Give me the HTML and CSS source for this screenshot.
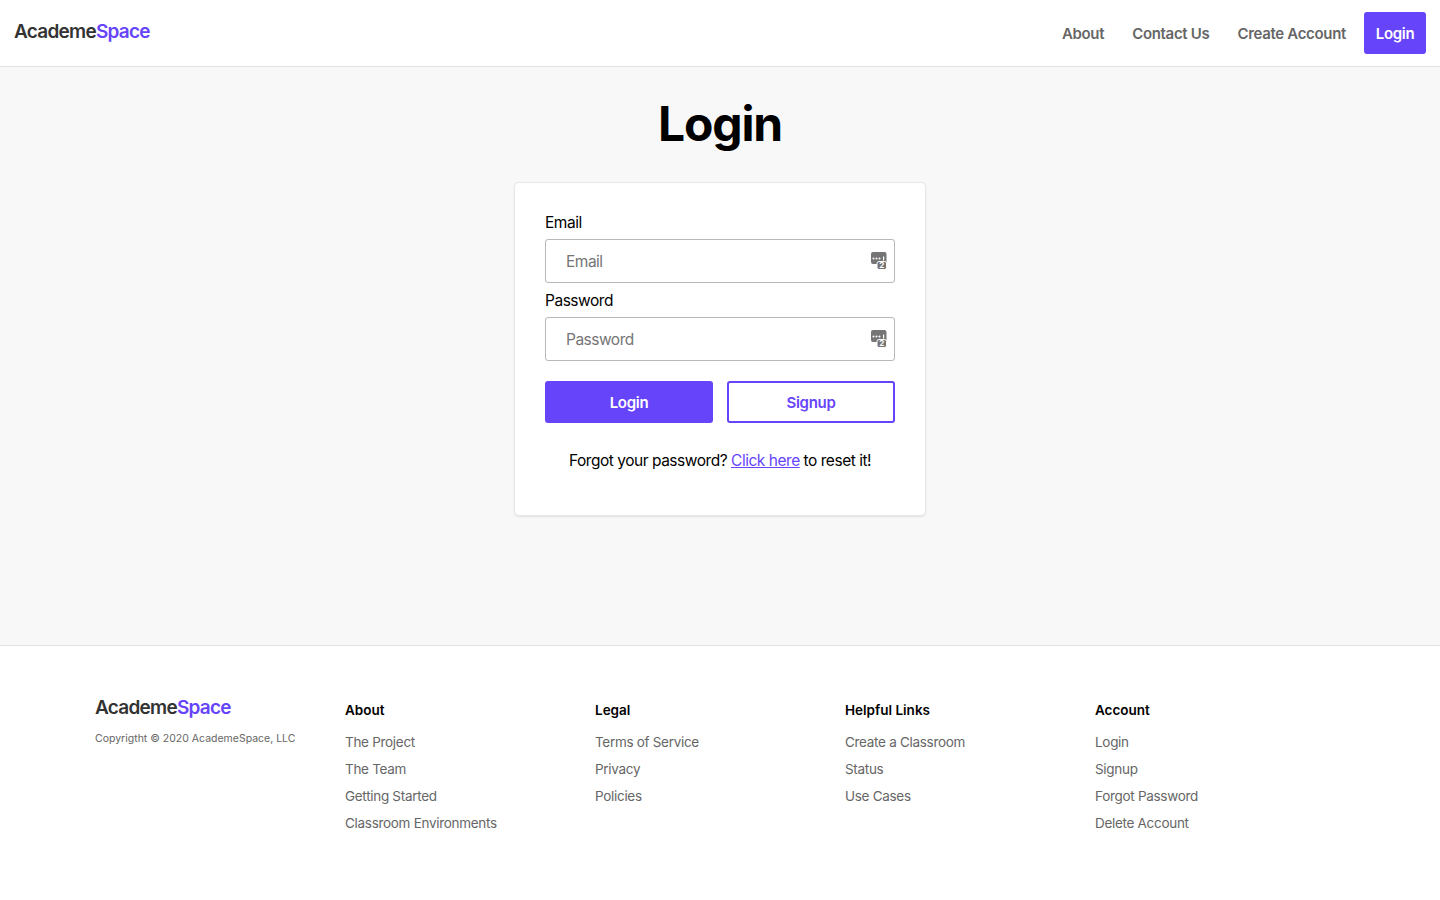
FILE: index.html
```
<!DOCTYPE html>
<html lang="en">
<head>
<meta charset="utf-8">
<title>Login - AcademeSpace</title>
<link rel="stylesheet" href="styles.css">
</head>
<body>
<header class="topbar">
  <a class="logo" href="#">Academe<span class="logo-accent">Space</span></a>
  <nav class="topnav">
    <a class="topnav-link" href="#">About</a>
    <a class="topnav-link" href="#">Contact Us</a>
    <a class="topnav-link" href="#">Create Account</a>
    <a class="topnav-btn" href="#">Login</a>
  </nav>
</header>
<main class="main">
  <h1 class="title">Login</h1>
  <form class="card">
    <label class="label" for="email">Email</label>
    <div class="field">
      <input class="input" id="email" placeholder="Email">
      <svg class="field-icon" width="16" height="18" viewBox="0 0 16 18"><rect x="0" y="0" width="15.5" height="12" rx="2" fill="#757575"/><circle cx="2.5" cy="6.5" r="1" fill="#fff"/><circle cx="5.5" cy="6.5" r="1" fill="#fff"/><circle cx="8.5" cy="6.5" r="1" fill="#fff"/><rect x="12" y="4.5" width="1.2" height="4" fill="#fff"/><rect x="6" y="9.5" width="9.5" height="8" rx="2" fill="#757575" stroke="#fff" stroke-width="1"/><text x="10.8" y="16.4" class="icon-num" text-anchor="middle">2</text></svg>
    </div>
    <label class="label" for="password">Password</label>
    <div class="field">
      <input class="input" id="password" placeholder="Password">
      <svg class="field-icon" width="16" height="18" viewBox="0 0 16 18"><rect x="0" y="0" width="15.5" height="12" rx="2" fill="#757575"/><circle cx="2.5" cy="6.5" r="1" fill="#fff"/><circle cx="5.5" cy="6.5" r="1" fill="#fff"/><circle cx="8.5" cy="6.5" r="1" fill="#fff"/><rect x="12" y="4.5" width="1.2" height="4" fill="#fff"/><rect x="6" y="9.5" width="9.5" height="8" rx="2" fill="#757575" stroke="#fff" stroke-width="1"/><text x="10.8" y="16.4" class="icon-num" text-anchor="middle">2</text></svg>
    </div>
    <div class="actions">
      <button class="btn btn-primary" type="button">Login</button>
      <button class="btn btn-outline" type="button">Signup</button>
    </div>
    <p class="forgot">Forgot your password? <a class="forgot-link" href="#">Click here</a> to reset it!</p>
  </form>
</main>
<footer class="footer">
  <div class="footer-brand">
    <a class="logo" href="#">Academe<span class="logo-accent">Space</span></a>
    <p class="copyright">Copyrigtht © 2020 AcademeSpace, LLC</p>
  </div>
  <div class="footer-col">
    <h2 class="footer-heading">About</h2>
    <a class="footer-link" href="#">The Project</a>
    <a class="footer-link" href="#">The Team</a>
    <a class="footer-link" href="#">Getting Started</a>
    <a class="footer-link" href="#">Classroom Environments</a>
  </div>
  <div class="footer-col">
    <h2 class="footer-heading">Legal</h2>
    <a class="footer-link" href="#">Terms of Service</a>
    <a class="footer-link" href="#">Privacy</a>
    <a class="footer-link" href="#">Policies</a>
  </div>
  <div class="footer-col">
    <h2 class="footer-heading">Helpful Links</h2>
    <a class="footer-link" href="#">Create a Classroom</a>
    <a class="footer-link" href="#">Status</a>
    <a class="footer-link" href="#">Use Cases</a>
  </div>
  <div class="footer-col">
    <h2 class="footer-heading">Account</h2>
    <a class="footer-link" href="#">Login</a>
    <a class="footer-link" href="#">Signup</a>
    <a class="footer-link" href="#">Forgot Password</a>
    <a class="footer-link" href="#">Delete Account</a>
  </div>
</footer>
</body>
</html>
```
FILE: styles.css
```
* { box-sizing: border-box; }
html, body { margin: 0; padding: 0; }
body {
  font-family: Inter, "Liberation Sans", sans-serif;
  background: #fff;
  color: #000;
  min-height: 900px;
}
a { text-decoration: none; }

.topbar {
  height: 67px;
  padding: 0 14px;
  display: flex;
  align-items: center;
  justify-content: space-between;
  border-bottom: 1px solid #e4e4e4;
  background: #fff;
}
.logo {
  font-size: 19px;
  font-weight: 600;
  letter-spacing: -0.75px;
  line-height: 24px;
  color: #333;
  display: block;
}
.topbar .logo { margin-top: -3px; }
.logo-accent { color: #6644fa; }
.topnav { display: flex; align-items: center; gap: 28px; }
.topnav-link { font-size: 15px; font-weight: 600; color: #666; letter-spacing: -0.32px; }
.topnav-btn {
  margin-left: -10px;
  width: 62px;
  height: 42px;
  display: flex;
  align-items: center;
  justify-content: center;
  border-radius: 3px;
  background: #6644fa;
  color: #fff;
  font-size: 15px;
  font-weight: 600;
  letter-spacing: -0.32px;
}

.main {
  height: 578px;
  background: #f8f8f8;
  display: flex;
  flex-direction: column;
  align-items: center;
  padding-top: 27px;
}
.title {
  margin: 0 0 28px;
  font-size: 48px;
  line-height: 60px;
  font-weight: 700;
  letter-spacing: -1.2px;
  color: #000;
}
.card {
  width: 412px;
  height: 334px;
  padding: 30px;
  background: #fff;
  border: 1px solid #e8e8e8;
  border-radius: 5px;
  box-shadow: 0 1px 2px rgba(0, 0, 0, 0.1);
}
.label {
  display: block;
  font-size: 15.5px;
  line-height: 19px;
  letter-spacing: -0.47px;
  margin-bottom: 7px;
}
.field { position: relative; margin-bottom: 8px; }
.input {
  display: block;
  width: 100%;
  height: 44px;
  padding: 0 20px;
  border: 1px solid #b8b8b8;
  border-radius: 3px;
  background: #fff;
  font-family: inherit;
  font-size: 15.5px;
  letter-spacing: -0.5px;
  outline: none;
}
.input::placeholder { color: #757575; opacity: 1; }
.field-icon { position: absolute; top: 13px; right: 8px; }
.icon-num { font-family: Inter, sans-serif; font-size: 8px; font-weight: 700; fill: #fff; }
.actions { display: flex; gap: 14px; margin-top: 20px; }
.btn {
  flex: 1;
  height: 42px;
  border-radius: 3px;
  font-family: inherit;
  font-size: 15px;
  font-weight: 600;
  letter-spacing: -0.3px;
}
.btn-primary { background: #6644fa; border: 2px solid #6644fa; color: #fff; }
.btn-outline { background: #fff; border: 2px solid #6644fa; color: #6644fa; }
.forgot {
  margin: 28px 0 0;
  text-align: center;
  font-size: 15.5px;
  line-height: 20px;
  letter-spacing: -0.47px;
}
.forgot-link { color: #6644fa; text-decoration: underline; }

.footer {
  height: 255px;
  padding: 50px 95px 0;
  display: grid;
  grid-template-columns: repeat(5, 250px);
  background: #fff;
  border-top: 1px solid #e4e4e4;
}
.copyright {
  margin: 12px 0 0;
  font-size: 10.5px;
  line-height: 14px;
  color: #666;
}
.footer-col { display: flex; flex-direction: column; }
.footer-heading {
  margin: 5px 0 10px;
  font-size: 13.5px;
  line-height: 18px;
  font-weight: 600;
  color: #000;
}
.footer-link {
  font-size: 13.5px;
  line-height: 27px;
  letter-spacing: -0.3px;
  color: #666;
}
```
